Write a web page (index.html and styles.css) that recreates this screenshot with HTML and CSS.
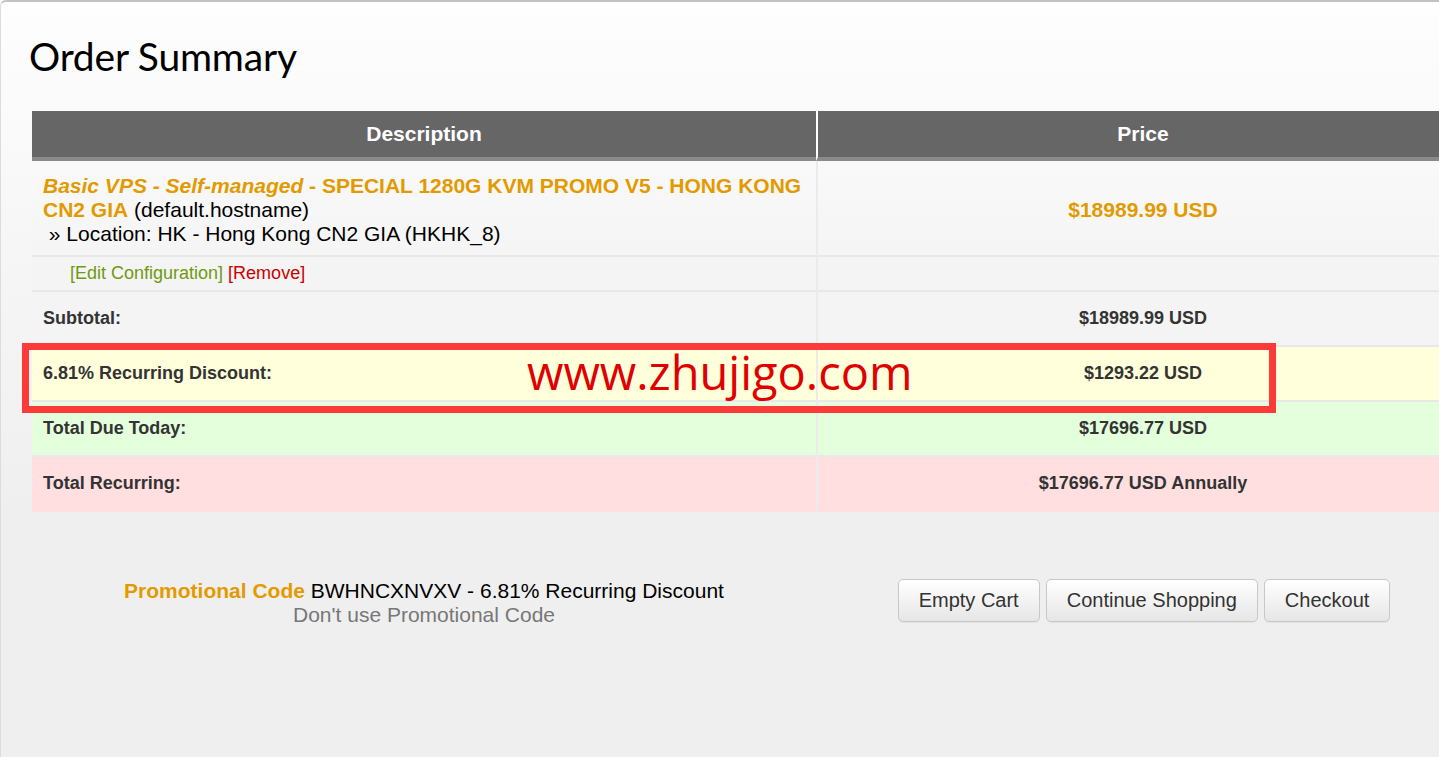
FILE: index.html
```html
<!DOCTYPE html>
<html lang="en">
<head>
  <meta charset="UTF-8" />
  <meta name="viewport" content="width=device-width, initial-scale=1.0"/>
  <title>Order Summary</title>
  <link rel="stylesheet" href="styles.css">
</head>
<body>
  <div class="page">
    <h1>Order Summary</h1>

    <table class="cart">
      <colgroup>
        <col class="col-desc">
        <col class="col-price">
      </colgroup>
      <thead>
        <tr>
          <th>Description</th>
          <th class="price-col">Price</th>
        </tr>
      </thead>
      <tbody>
        <tr class="item-row">
          <td>
            <span class="product"><em>Basic VPS - Self-managed</em> - SPECIAL 1280G KVM PROMO V5 - HONG KONG CN2 GIA</span> (default.hostname)<br>
            &nbsp;&raquo; Location: HK - Hong Kong CN2 GIA (HKHK_8)
          </td>
          <td class="price-col item-price">$18989.99 USD</td>
        </tr>
        <tr class="actions-row">
          <td><a class="edit" href="#">[Edit Configuration]</a> <a class="remove" href="#">[Remove]</a></td>
          <td class="price-col"></td>
        </tr>
        <tr class="sum-row subtotal">
          <td>Subtotal:</td>
          <td class="price-col">$18989.99 USD</td>
        </tr>
        <tr class="sum-row discount">
          <td>6.81% Recurring Discount:</td>
          <td class="price-col">$1293.22 USD</td>
        </tr>
        <tr class="sum-row due">
          <td>Total Due Today:</td>
          <td class="price-col">$17696.77 USD</td>
        </tr>
        <tr class="sum-row recurring">
          <td>Total Recurring:</td>
          <td class="price-col">$17696.77 USD Annually</td>
        </tr>
      </tbody>
    </table>

    <div class="cart-footer">
      <div class="promo">
        <span class="promo-label">Promotional Code</span> BWHNCXNVXV - 6.81% Recurring Discount<br>
        <a class="promo-remove" href="#">Don't use Promotional Code</a>
      </div>
      <div class="buttons">
        <button type="button">Empty Cart</button>
        <button type="button">Continue Shopping</button>
        <button type="button">Checkout</button>
      </div>
    </div>

    <!-- watermark laid over the discount row -->
    <div class="mark-box"></div>
    <div class="mark-text">www.zhujigo.com</div>
  </div>
</body>
</html>
```

FILE: styles.css
```css
html, body {
  margin: 0;
  height: 100%;
}

body {
  font-family: "Liberation Sans", Arial, sans-serif;
  background: linear-gradient(#fefefe 0, #f6f6f6 250px, #efefef 520px, #efefef 100%);
  overflow: hidden;
}

.page {
  position: relative;
  height: 755px;
  border-top: 2px solid #c2c2c2;
  border-left: 1px solid #dcdcdc;
  border-top-left-radius: 6px;
  padding-left: 31px;
}

h1 {
  font-family: Lato, "Open Sans", sans-serif;
  font-weight: 400;
  font-size: 39px;
  line-height: 48px;
  letter-spacing: -0.2px;
  color: #000;
  margin: 30px 0 31px -3px;
}

.cart {
  border-collapse: separate;
  border-spacing: 0;
  table-layout: fixed;
  width: 1436px;
}

.col-desc {
  width: 784px;
}

.col-price {
  width: 652px;
}

.cart th {
  height: 46px;
  padding: 0;
  background-color: #666;
  border-bottom: 4px solid #8a8a8a;
  color: #fff;
  font-size: 21px;
  font-weight: bold;
  text-align: center;
}

.cart th.price-col {
  border-left: 2px solid #fff;
}

.cart td {
  padding: 0 11px;
  border-bottom: 2px solid #e8e8e8;
  font-size: 18px;
}

.cart td.price-col {
  border-left: 2px solid #ebebeb;
  text-align: center;
}

.item-row td {
  padding-top: 13px;
  padding-bottom: 9px;
  font-size: 21px;
  line-height: 24px;
  color: #000;
  background: linear-gradient(#f9f9f9, #f5f5f5);
}

.product {
  color: #e39a00;
  font-weight: bold;
}

.cart .item-price {
  color: #e39a00;
  font-weight: bold;
}

.actions-row td {
  height: 33px;
  padding-top: 0;
  padding-bottom: 0;
  background-color: #f4f4f4;
}

.actions-row td:first-child {
  padding-left: 38px;
}

.edit {
  color: #6e9a12;
  text-decoration: none;
}

.remove {
  color: #cc0000;
  text-decoration: none;
}

.sum-row td {
  height: 53px;
  font-weight: bold;
  color: #333;
}

.subtotal td {
  background-color: #f4f4f4;
}

.discount td {
  background-color: #ffffdc;
}

.due td {
  background-color: #e4ffdc;
}

.recurring td {
  background-color: #ffdfdf;
  border-bottom-color: transparent;
}

.cart-footer {
  display: grid;
  grid-template-columns: 784px 652px;
  margin-top: 67px;
}

.promo {
  text-align: center;
  font-size: 21px;
  line-height: 24px;
  color: #000;
}

.promo-label {
  color: #e39a00;
  font-weight: bold;
}

.promo-remove {
  color: #777;
  text-decoration: none;
}

.buttons {
  display: flex;
  justify-content: center;
  gap: 6px;
  padding-left: 4px;
}

.buttons button {
  height: 43px;
  padding: 0 20px;
  font-family: "Liberation Sans", Arial, sans-serif;
  font-size: 20px;
  color: #333;
  background: linear-gradient(#ffffff, #e6e6e6);
  border: 1px solid #c8c8c8;
  border-radius: 5px;
  box-shadow: 0 1px 1px rgba(0, 0, 0, 0.05);
}

.mark-box {
  position: absolute;
  left: 21px;
  top: 341px;
  width: 1254px;
  height: 70px;
  box-sizing: border-box;
  border: 7px solid #fb3a3a;
}

.mark-text {
  position: absolute;
  left: 526px;
  top: 347px;
  font-family: "Open Sans", sans-serif;
  font-size: 47px;
  line-height: 47px;
  color: #e00000;
}
```
